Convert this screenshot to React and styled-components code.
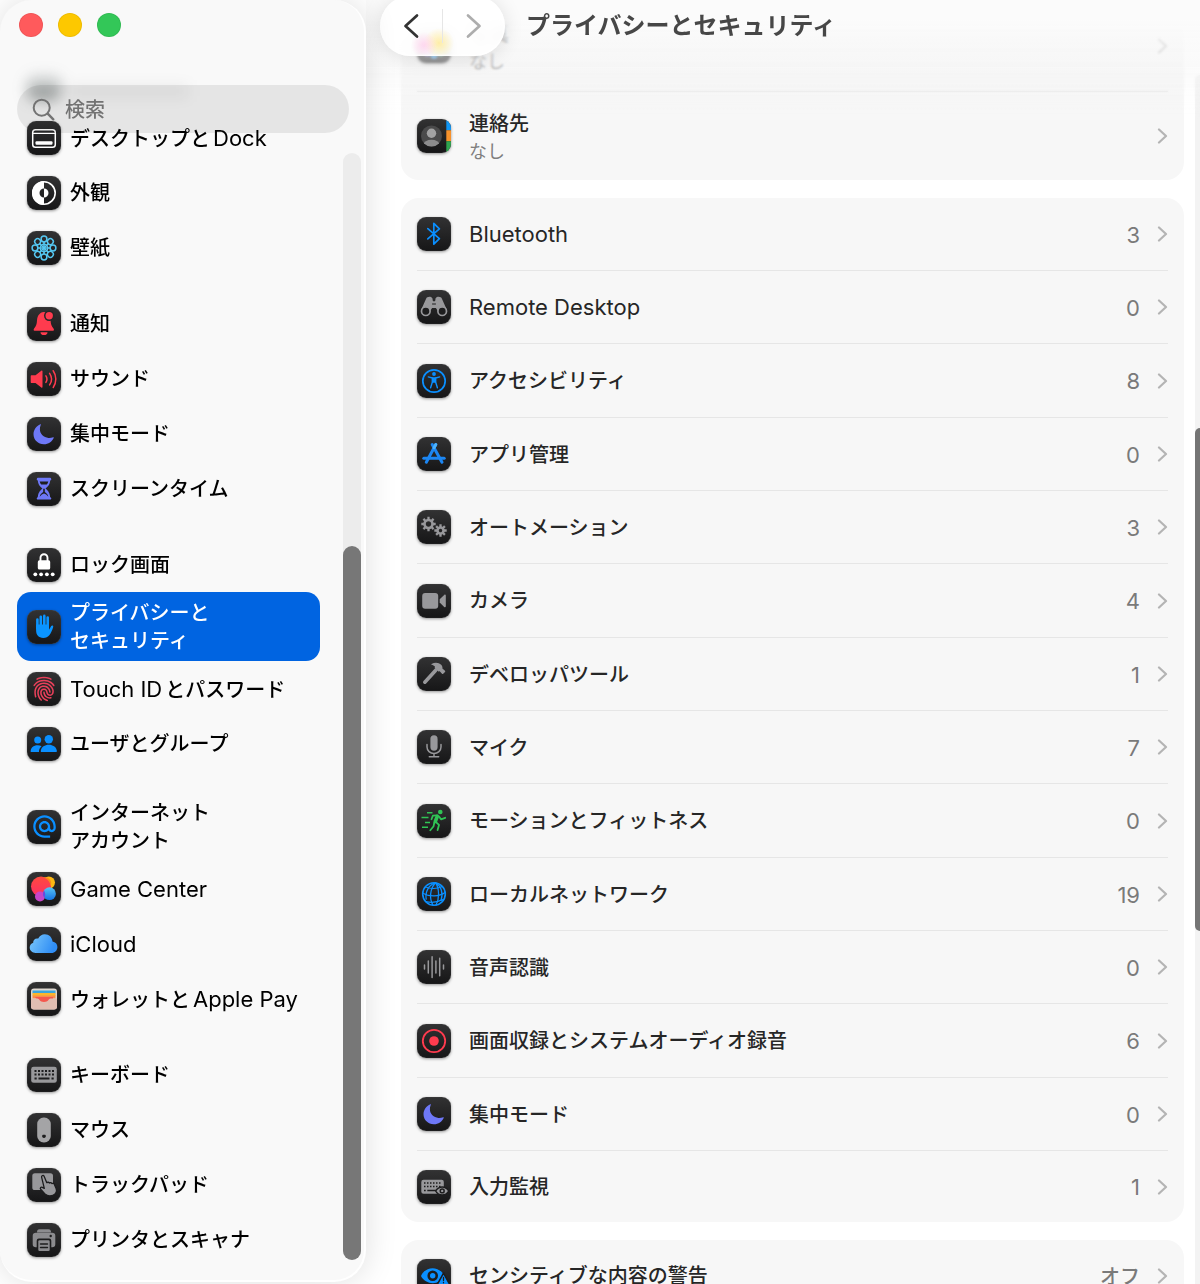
import { Fragment } from 'react'
import styled, { createGlobalStyle, css } from 'styled-components'
import { IoFingerPrint } from 'react-icons/io5'
import { MdAlternateEmail } from 'react-icons/md'

const GlobalStyle = createGlobalStyle`
  * { box-sizing: border-box; }

  body {
    margin: 0;
    background: #fff;
    font-family: Inter, 'Noto Sans CJK JP', sans-serif;
    font-size: 20px;
    line-height: 28px;
    font-weight: 500;
    color: #262626;
  }

  a { color: inherit; text-decoration: none; }
  ul { list-style: none; margin: 0; padding: 0; }
`

const GRAY = '#98989b'
const BLUE = '#0a8fff'
const RED = '#ff3b4e'
const INDIGO = '#6e78f7'
const DARK = '#1d1d1e'

/* ---------- window ---------- */

const Window = styled.div`
  display: flex;
  height: 100vh;
  overflow: hidden;
  background: #fff;
`

const Sidebar = styled.aside`
  position: relative;
  z-index: 2;
  flex: none;
  display: flex;
  width: 366px;
  margin-bottom: 2px;
  padding-left: 17px;
  background: #f9f9f9;
  border-right: 2px solid #fff;
  border-bottom: 2px solid #fff;
  border-radius: 32px;
  box-shadow: 0 0 32px rgba(0, 0, 0, 0.13);
`

const SidebarTop = styled.div`
  position: absolute;
  top: 0;
  left: 0;
  right: 0;
  padding: 13px 15px 0 17px;
`

const Lights = styled.div`
  display: flex;
  gap: 15px;
  padding-left: 2px;
`

const Light = styled.button`
  width: 24px;
  height: 24px;
  padding: 0;
  border: 1px solid rgba(0, 0, 0, 0.06);
  border-radius: 50%;
  background: ${(p) => p.$color};
`

const Search = styled.label`
  display: flex;
  align-items: center;
  gap: 10px;
  height: 48px;
  margin-top: 48px;
  padding: 0 15px;
  border-radius: 24px;
  background: rgba(0, 0, 0, 0.08);
`

const SearchInput = styled.input`
  flex: 1;
  min-width: 0;
  padding: 2px 0 0;
  border: 0;
  outline: 0;
  background: none;
  font: inherit;
  color: #262626;

  &::placeholder { color: #737373; opacity: 1; }
`

/* the row that is scrolled under the search field */
const HiddenRow = styled.div`
  display: flex;
  align-items: flex-end;
  gap: 9px;
  height: 110px;
  padding: 0 0 10px 10px;
  filter: blur(7px);

  &::before {
    content: '';
    width: 34px;
    height: 26px;
    border-radius: 9px;
    background: linear-gradient(rgba(70, 85, 90, 0.1), rgba(60, 70, 68, 0.55));
  }

  &::after {
    content: '';
    width: 118px;
    height: 12px;
    margin-bottom: 3px;
    background: #000;
    opacity: 0.06;
  }
`

const Nav = styled.nav`
  flex: 1;
`

const NavGroup = styled.ul`
  & + & { margin-top: 21px; }
`

const NavLink = styled.a`
  display: flex;
  align-items: center;
  gap: 9px;
  height: ${(p) => (p.$tall ? 69 : 55)}px;
  padding: 0 10px;
  border-radius: 14px;
  color: #000;
  white-space: pre-line;

  ${(p) => p.$active && css`
    background: #0064e1;
    color: #fff;
  `}
`

const NavText = styled.span`
  padding-top: 1px;
`

const Track = styled.div`
  display: flex;
  flex-direction: column;
  width: 18px;
  margin: 153px 3px 20px 23px;
  border-radius: 9px;
  background: #ececec;

  &::before { content: ''; flex: 11; }
`

const Thumb = styled.div`
  flex: 20;
  border-radius: 9px;
  background: #777;
`

/* ---------- main pane ---------- */

const Main = styled.main`
  position: relative;
  flex: 1;
  min-width: 0;
  display: flex;
  align-items: flex-start;
`

const List = styled.div`
  flex: 1;
  min-width: 0;
  display: flex;
  flex-direction: column;
  gap: 18px;
  margin: 0 11px 0 35px;
`

const Card = styled.ul`
  border-radius: ${(p) => (p.$cut ? '0 0 18px 18px' : '18px')};
  background: #f7f7f7;
`

const Row = styled.li`
  height: 73px;
  margin: 0 16px;
  border-bottom: 1px solid #e6e6e6;

  &:nth-child(3n) { height: 74px; }

  ${Card} > &:last-child {
    height: 71px;
    border-bottom: 0;
  }

  ${Card} > &.detail { height: ${(p) => (p.$first ? 92 : 88)}px; }
`

const RowLink = styled.a`
  display: flex;
  align-items: center;
  height: 100%;
`

const RowText = styled.span`
  flex: 1;
  margin-left: 18px;
  padding-top: ${(p) => (p.$detail ? 4 : 2)}px;
  line-height: 27px;
`

const Sub = styled.small`
  display: block;
  font-size: 18px;
  font-weight: 400;
  color: #7f7f7f;
`

const Value = styled.span`
  margin-right: 17px;
  padding-top: 2px;
  color: #7a7a7a;
`

const Latin = styled.span`
  margin: 0 ${(p) => (p.$after ? 3 : 0)}px 0 ${(p) => (p.$before ? 3 : 0)}px;
  font-size: 22px;
  font-weight: 400;
`

const HeaderFade = styled.div`
  position: absolute;
  top: 0;
  left: 0;
  right: 0;
  height: 120px;
  background: linear-gradient(rgba(251, 251, 251, 1) 20px, rgba(249, 249, 249, 0.7) 44px, rgba(244, 244, 244, 0.45) 75px, rgba(244, 244, 244, 0));
  backdrop-filter: blur(1px);
  mask-image: linear-gradient(#000 65px, transparent);
`

const Header = styled.header`
  position: absolute;
  top: 0;
  left: 0;
  right: 0;
  display: flex;
  align-items: flex-start;
  gap: 21px;
  padding-left: 14px;
`

const Pill = styled.div`
  display: flex;
  align-items: center;
  width: 125px;
  height: 60px;
  margin-top: -4px;
  border-radius: 30px;
  background:
    radial-gradient(circle at 44px 49px, rgba(255, 205, 235, 0.75), rgba(255, 205, 235, 0) 13px),
    radial-gradient(circle at 59px 47px, rgba(255, 232, 140, 0.75), rgba(255, 232, 140, 0) 15px),
    rgba(255, 255, 255, 0.86);
  backdrop-filter: blur(4px);
  box-shadow: 0 2px 20px rgba(0, 0, 0, 0.12), inset 0 0 2px 1px #fff;
`

const PillButton = styled.button`
  flex: 1;
  display: flex;
  align-items: center;
  justify-content: center;
  height: 34px;
  padding: 0;
  border: 0;
  background: none;
  color: ${(p) => (p.disabled ? '#adadad' : '#333')};

  & + & { border-left: 1px solid #e6e6e6; }
`

const Title = styled.h1`
  margin: 9px 0 0;
  font-size: 24px;
  line-height: 34px;
  font-weight: 600;
  color: #474747;
`

const MainTrack = styled.div`
  align-self: stretch;
  display: flex;
  flex-direction: column;
  width: 5px;
  margin-top: 75px;
  border-radius: 9px 0 0 0;
  background: #f3f3f3;

  &::before, &::after { content: ''; flex: 7; }
`

const MainThumb = styled.div`
  flex: 10;
  border-radius: 9px 0 0 9px;
  background: #757575;
`

/* ---------- icons ---------- */

const Tile = styled.span`
  flex: none;
  display: flex;
  align-items: center;
  justify-content: center;
  width: 34px;
  height: 34px;
  overflow: hidden;
  border-radius: 9px;
  background: linear-gradient(#323233, #161617);
  box-shadow: 0 1px 3px rgba(0, 0, 0, 0.4), inset 0 0 1px #666;
  color: ${(p) => p.$color || '#fff'};
`

const Art = ({ children }) => (
  <svg width='34' height='34' viewBox='0 0 34 34' fill='currentColor' strokeLinecap='round' strokeLinejoin='round' aria-hidden='true'>
    {children}
  </svg>
)

const petals = [0, 45, 90, 135, 180, 225, 270, 315]

const Gear = ({ x, y, r }) => (
  <g transform={`translate(${x} ${y})`} fill='none' stroke='currentColor' strokeLinecap='butt'>
    <circle r={r - 3.2} strokeWidth='2.6' />
    {petals.map((a) => (
      <path key={a} d={`M0 ${3 - r}V${-r}`} strokeWidth='2.3' transform={`rotate(${a})`} />
    ))}
  </g>
)

const Moon = (
  <path d='M13.4 7.2C9.2 8.9 6.5 12.9 6.5 17.3c0 5.6 4.6 10 10.3 10 4.6 0 8.5-2.7 10-6.5.2-.5-.2-.7-.6-.6-1.5.5-3 .8-4.7.7-4.8-.2-8.400-3.800-8.600-8.300-.1-1.700.2-3.300.9-4.900.2-.5-.1-.7-.4-.5z' />
)

const icons = {
  dock: ['#fff', (
    <>
      <rect x='5.7' y='8.8' width='22.6' height='17.4' rx='2.8' fill='none' stroke='currentColor' strokeWidth='1.5' />
      <path d='M6.5 12.3h21' stroke='currentColor' strokeWidth='1.3' />
      <rect x='8.5' y='20.2' width='17' height='3.5' rx='1' />
    </>
  )],
  appearance: ['#fff', (
    <>
      <circle cx='17' cy='17' r='11.2' fill='none' stroke='currentColor' strokeWidth='1.6' />
      <path d='M17 5a12 12 0 0 0 0 24v-7.5a4.500 4.500 0 0 1 0-9z' />
      <path d='M17 12.5a4.5 4.5 0 0 1 0 9z' />
    </>
  )],
  wallpaper: ['#55c8f2', (
    <g fill='none' stroke='currentColor'>
      {petals.map((a) => (
        <g key={a} transform={`rotate(${a} 17 17)`}>
          <circle cx='17' cy='8' r='2.9' strokeWidth='1.5' />
          <path d='M17 11.2V17' strokeWidth='1.6' />
        </g>
      ))}
      <circle cx='17' cy='17' r='3.8' strokeWidth='1.2' />
    </g>
  )],
  bell: [RED, (
    <>
      <path d='M7.5 23.8c-1 0-1.1-1.3-.4-2.2 2-2.4 2.7-4 2.9-8C10.3 8.7 12.5 5.5 16.7 5c4.3.5 6.6 3.8 6.9 8.6.2 4 .9 5.6 2.9 8 .7.9.6 2.2-.4 2.2z' />
      <path d='M13.500 25.300h7a3.500 2.800 0 0 1-7 0z' />
      <circle cx='22.2' cy='8.8' r='5.2' fill='#262627' />
      <circle cx='22.2' cy='8.8' r='3.7' />
    </>
  )],
  sound: [RED, (
    <>
      <path d='M4.7 13.2h3.8l5.8-4.5c.6-.5 1.2-.2 1.2.6v15.6c0 .8-.6 1.1-1.2.6l-5.8-4.5H4.7c-.6 0-1-.4-1-1v-5.8c0-.6.4-1 1-1z' />
      <g fill='none' stroke='currentColor' strokeWidth='1.5'>
        <path d='M18.900 13.800c1.300 2 1.300 4.600 0 6.600' />
        <path d='M22.600 11.300c2.400 3.500 2.400 8.100 0 11.600' />
        <path d='M26.200 8.700c3.500 5 3.500 11.800 0 16.800' />
      </g>
    </>
  )],
  moon: [INDIGO, Moon],
  hourglass: [INDIGO, (
    <>
      <rect x='9.8' y='5.7' width='14.4' height='2.8' rx='1.2' />
      <rect x='9.8' y='25.2' width='14.4' height='2.4' rx='1.2' />
      <path d='M10.8 7.5h12.400c0 5-2.200 7-4.700 9 2.500 2 4.700 4.500 4.700 9.500H10.800c0-5 2.200-7.500 4.700-9.500-2.500-2-4.700-4-4.700-9z' />
      <path d='M12.700 9.500h8.600c-.3 1.200-.8 2.200-1.500 3h-5.600c-.7-.8-1.200-1.800-1.500-3zM16.200 16.800h1.600v3.200c1.800 1.200 3 2.500 3.500 4.400h-8.600c.5-1.900 1.700-3.200 3.500-4.400z' fill={DARK} />
      <path d='M12.800 25c.8-1.800 2.500-2.800 4.200-3.400 1.700.6 3.400 1.600 4.200 3.400z' />
    </>
  )],
  lock: ['#fff', (
    <>
      <rect x='10.8' y='12.3' width='12.4' height='9.2' rx='1.6' />
      <path d='M13.500 12.500V9.700a3.500 3.500 0 0 1 7 0v2.800' fill='none' stroke='currentColor' strokeWidth='1.9' />
      {[8.3, 14.1, 19.9, 25.7].map((x) => <circle key={x} cx={x} cy='26.3' r='1.9' />)}
    </>
  )],
  hand: ['#0a94ff', (
    <>
      <path d='M10.400 9.500v9M13.800 6.700v11M17.300 5.900v11M20.700 7.600v11' fill='none' stroke='currentColor' strokeWidth='2.6' />
      <path d='M9.100 14.500h12.900v5.200l2.200-3.600c.7-1 2.500-.6 2 1-1 3.300-2.300 6.200-3.700 7.900-1.600 2-3.600 2.900-6.200 2.900-4.800 0-7.200-3-7.200-7.600z' />
    </>
  )],
  users: [BLUE, (
    <>
      <circle cx='10.7' cy='13' r='3.5' />
      <path d='M3.700 24.900c-.4-4 2.800-6.700 7-6.700 1.500 0 2.800.3 3.900 1-1.800 1.500-2.700 3.300-2.600 5.700z' />
      <circle cx='21.8' cy='12.2' r='4.2' />
      <path d='M14.300 24.900c-.6-.2-.6-.9-.5-1.500.7-3.400 3.900-5.600 8-5.600s7.300 2.200 8 5.600c.1.600.1 1.300-.5 1.500z' />
    </>
  )],
  games: ['#fff', (
    <>
      <defs>
        <linearGradient id='gcBlue' x2='0' y2='1'><stop stopColor='#58c4f5' /><stop offset='1' stopColor='#1573e6' /></linearGradient>
        <linearGradient id='gcRed' x2='0' y2='1'><stop stopColor='#ff4a3e' /><stop offset='1' stopColor='#fb2f66' /></linearGradient>
      </defs>
      <circle cx='21.8' cy='10.6' r='6.2' fill='#fdb913' />
      <circle cx='14' cy='14.5' r='10' fill='url(#gcRed)' />
      <path d='M16.500 5.500a6 6 0 0 1 7 8.500 10 10 0 0 0-7-8.500z' fill='#f98a1a' />
      <circle cx='13' cy='24.5' r='5' fill='#c545c9' />
      <circle cx='22.5' cy='21.7' r='6.4' fill='url(#gcBlue)' />
      <path d='M17 18.500a6.400 6.400 0 0 0 .5 7.200c1-2 1-5-.5-7.200z' fill='#6b49dd' />
    </>
  )],
  cloud: ['#fff', (
    <>
      <defs><linearGradient id='icloud' x2='1' y2='.3'><stop stopColor='#7cc9fb' /><stop offset='1' stopColor='#2f8df5' /></linearGradient></defs>
      <path d='M8.600 26c-3.300 0-5.900-2.300-5.900-5.400 0-2.400 1.400-4.200 3.500-4.900-.2-2.900 2.400-4.900 5-4.100 1.300-2.800 3.700-4.400 6.600-4.400 4.300 0 7.400 3.100 7.700 7.300 2.900.4 4.900 2.700 4.900 5.500 0 3.400-2.600 6-6 6z' fill='url(#icloud)' />
    </>
  )],
  wallet: ['#fff', (
    <>
      <rect x='4' y='6.5' width='26' height='21' rx='3' fill='#ded8d0' />
      <path d='M5.500 8.500h23v3h-23z' fill='#3aa5dd' />
      <path d='M5.500 11h23v3h-23z' fill='#fbb62c' />
      <path d='M5.500 13.500h23v3h-23z' fill='#f78f4c' />
      <path d='M8 15h18v3l-9 4-6-3z' fill='#f4574e' />
      <path d='M4 16.500h6.500c1.800 0 2 3.500 6.500 3.500s4.700-3.500 6.500-3.500H30v8a3 3 0 0 1-3 3H7a3 3 0 0 1-3-3z' fill='#e0beb2' />
    </>
  )],
  keyboard: [GRAY, (
    <>
      <rect x='4.2' y='8.8' width='25.6' height='16' rx='2.4' />
      <path d='M7.500 13h19.500M7.500 16.500h19.500' stroke={DARK} strokeWidth='2' strokeDasharray='2 1.5' strokeLinecap='butt' />
      <path d='M7.500 20.500h2.200M11.500 20.500h11M24.500 20.500h2.200' stroke={DARK} strokeWidth='1.9' strokeLinecap='butt' />
    </>
  )],
  mouse: ['#a4a4a6', (
    <>
      <rect x='10.2' y='4.5' width='13.6' height='25' rx='6.5' />
      <path d='M17 21.800c1-.5 2 .2 1.900 1.300-.1 1-.9 2.100-1.900 1.700-1 .4-1.900-.7-1.900-1.700-.1-1.100.9-1.800 1.900-1.300z' fill={DARK} />
    </>
  )],
  trackpad: [GRAY, (
    <>
      <rect x='5.3' y='5.2' width='20.7' height='16.8' rx='2.6' />
      <path
        d='M14.600 9.200c-.5-1.700 1.900-2.500 2.600-.8l2.600 6.300c1-.8 2.200-.5 2.600.4.900-.7 2.100-.4 2.500.5 1-.6 2.100-.1 2.500.9l1.700 4c1 2.700-.2 5.300-2.800 6.600-3.200 1.500-6.300.8-8.600-1.500l-4-4.300c-1.100-1.300.2-2.600 1.600-1.900l2 1z'
        stroke={DARK} strokeWidth='1.3'
      />
    </>
  )],
  printer: ['#8c8c8f', (
    <>
      <path d='M10 9.500c0-2 .8-3.200 2.500-3.200h9c1.700 0 2.500 1.200 2.500 3.200z' />
      <rect x='5.7' y='9.7' width='22.6' height='14.5' rx='3.2' />
      <rect x='9.7' y='15.5' width='14.6' height='13' rx='2.2' fill={DARK} />
      <rect x='11.3' y='17.2' width='11.4' height='10.8' rx='1.3' />
      <path d='M13.500 21h7M13.500 24.500h7' stroke={DARK} strokeWidth='1.4' />
      <circle cx='23.7' cy='13' r='1.2' fill={DARK} />
    </>
  )],
  bluetooth: [BLUE, <path d='M10.800 11.600 22.400 21.600 16.800 27.200V6.300L22.400 11.900 10.800 21.900' fill='none' stroke='currentColor' strokeWidth='1.7' />],
  binoculars: [GRAY, (
    <>
      <path d='M9.200 8.600c.3-2.300 5.500-2.700 6.200-.3l.5 3h2.200l.5-3c.7-2.400 5.900-2 6.200.3l4.700 10.500-8 3-2.600-4h-3.800l-2.600 4-8-3z' />
      <g fill={DARK} stroke='currentColor' strokeWidth='1.7'>
        <circle cx='8.8' cy='21.2' r='4.3' />
        <circle cx='25.2' cy='21.2' r='4.3' />
      </g>
      <path d='M15.500 14h3' stroke={DARK} strokeWidth='1' />
    </>
  )],
  accessibility: [BLUE, (
    <>
      <circle cx='17' cy='17' r='11.2' fill='none' stroke='currentColor' strokeWidth='1.7' />
      <circle cx='17' cy='10' r='1.9' />
      <path d='M11.300 12.900 15.300 14v4.200l-1.700 5.600M22.700 12.900 18.700 14v4.200l1.700 5.600' fill='none' stroke='currentColor' strokeWidth='1.4' />
      <path d='M15 13.300h4v5.500h-4z' />
    </>
  )],
  appStore: ['#1c86f2', (
    <g fill='none' stroke='currentColor' strokeWidth='3'>
      <path d='M6.800 21.300h20.400' />
      <path d='M18.800 7.500 9.300 25.300M15.200 7.500l9.800 17.800' />
      <path d='M17 10.700l1.800-3.200' stroke='#4db2fb' />
    </g>
  )],
  gears: [GRAY, (
    <>
      <Gear x='11.5' y='14' r={7.2} />
      <Gear x='23.5' y='20.5' r={6.2} />
    </>
  )],
  camera: [GRAY, (
    <>
      <rect x='5.2' y='9' width='16' height='15.8' rx='3' />
      <path d='M22.700 15.200l4.500-4.300c.7-.6 1.600-.4 1.600.6v10.800c0 1-.9 1.200-1.600.6l-4.500-4.300z' />
    </>
  )],
  hammer: [GRAY, (
    <>
      <path d='M7.800 25.200 18.500 13.500' stroke='currentColor' strokeWidth='3.6' />
      <path d='M14.500 7c3.200-2 7.200-1.800 9.700.8 1.200 1.300 1.400 2.500 1.200 3.700l2.600 2.200c.4.4.4.8 0 1.200l-1.800 1.800c-.4.4-.8.4-1.200 0l-2.300-2.400-1.500.3-3.500-3.300.2-1.700c-.7-1-1.900-1.700-3.300-1.900-.4-.1-.4-.5-.1-.7z' />
    </>
  )],
  mic: [GRAY, (
    <>
      <rect x='13.4' y='5.3' width='7.2' height='15.4' rx='3.6' />
      <path d='M10 14.500V17a7 6.500 0 0 0 14 0v-2.500M17 23.500v3M12.300 26.700h9.400' fill='none' stroke='currentColor' strokeWidth='1.5' />
    </>
  )],
  runner: ['#30c455', (
    <>
      <circle cx='23.3' cy='8' r='2.3' />
      <g fill='none' stroke='currentColor' strokeWidth='1.8'>
        <path d='M20.300 12.300 18.300 17.500' strokeWidth='3.6' />
        <path d='M20 11.300l-4.200.4-1.300 3.500M22 12.500l2 2.800 4.200-1.500' />
        <path d='M19 18.200l3 2.700-1.400 5.200M17.300 18.500l-.7 3.700-3.300 4' />
        <path d='M10 8.700h5.500M4.500 13.500h7M8 18.500h5M5 23.300h6' strokeWidth='1.4' strokeLinecap='butt' />
      </g>
    </>
  )],
  globe: [BLUE, (
    <g fill='none' stroke='currentColor' strokeWidth='1.3'>
      <circle cx='17' cy='17' r='11.3' strokeWidth='1.6' />
      <path d='M18.500 5.700c-5.500 6-6.500 15.500-2.500 22.500M18.500 5.700c-7 2.500-10.500 9-9.300 16.500M18.500 5.700c4 6 4 16 .5 22.500M18.500 5.700c5.800 3.500 8 10.500 5.500 18' />
      <path d='M8.500 10c4.500 1.800 11.500 2 16.500-.4M5.800 16.200c6.500 3.700 16.500 3.500 22.300-.7M9 24.700c5 1 11.500.6 16.500-2' />
    </g>
  )],
  wave: [GRAY, <path d='M7.500 15v4M11.300 11v12M15.100 6.800v20.600M18.900 11v12M22.700 8.300v17.400M26.500 15v4' stroke='currentColor' strokeWidth='1.5' />],
  record: [RED, (
    <>
      <circle cx='17' cy='17' r='11.2' fill='none' stroke='currentColor' strokeWidth='1.8' />
      <circle cx='17' cy='17' r='4.8' />
    </>
  )],
  keyboardEye: [GRAY, (
    <>
      <rect x='4.3' y='9.7' width='22.5' height='14' rx='2.2' />
      <path d='M7 13h17M7 16.500h17' stroke={DARK} strokeWidth='1.5' strokeDasharray='1.5 1.5' strokeLinecap='butt' />
      <path d='M7 20.500h1.700M10.300 20.500h9' stroke={DARK} strokeWidth='1.5' strokeLinecap='butt' />
      <path d='M18.700 21c3-5.500 10-5.500 13 0-3 5.300-10 5.300-13 0z' stroke={DARK} strokeWidth='1.5' />
      <circle cx='25.2' cy='20.9' r='2.7' fill={DARK} />
      <circle cx='25.2' cy='20.9' r='1.2' />
    </>
  )],
  eyeWarning: [BLUE, (
    <>
      <path d='M4 17c4.500-10.500 18.500-10.500 23.500 0-4.500 9.500-19 9.500-23.500 0z' />
      <circle cx='15.7' cy='16.7' r='5.3' fill={DARK} />
      <circle cx='15.7' cy='16.7' r='2.7' />
      <path d='M26.500 14.200 33 26H20z' stroke={DARK} strokeWidth='1.5' />
      <path d='M26.500 18.500v3M26.500 23.500v.3' stroke={DARK} strokeWidth='1.3' />
    </>
  )],
  contacts: ['#fff', (
    <>
      <path d='M29.300 0H34v11.300h-4.700z' fill='#1096f5' />
      <path d='M29.300 11.300H34v11h-4.700z' fill='#f7922b' />
      <path d='M29.300 22.300H34V34h-4.700z' fill='#2fa44f' />
      <clipPath id='contactRing'><circle cx='14.5' cy='17' r='10.5' /></clipPath>
      <circle cx='14.5' cy='17' r='10.5' fill='#4a4a4b' />
      <circle cx='14.5' cy='14.3' r='4.7' fill='#a2a2a3' />
      <ellipse cx='14.5' cy='25.5' rx='8' ry='4.7' fill='#8c8c8d' clipPath='url(#contactRing)' />
    </>
  )],
  photos: ['#fff', petals.map((a, i) => (
    <rect
      key={a} x='13.5' y='4' width='7' height='12' rx='3.5' opacity='.9' transform={`rotate(${a} 17 17)`}
      fill={['#f8a32b', '#f6d32d', '#9cca3c', '#4fb38a', '#2f9bf0', '#7b6be0', '#d45ac0', '#f2566b'][i]}
    />
  ))],
}

const Icon = ({ name }) => {
  if (name === 'at') return <Tile $color={BLUE}><MdAlternateEmail size={27} aria-hidden='true' /></Tile>
  if (name === 'fingerprint') return <Tile $color='#e8405a'><IoFingerPrint size={26} aria-hidden='true' /></Tile>
  const [color, art] = icons[name]
  return <Tile $color={color}><Art>{art}</Art></Tile>
}

const Chevron = () => (
  <svg width='11' height='16' viewBox='0 0 11 16' fill='none' stroke='#b4b4b4' strokeWidth='2.2' strokeLinecap='round' strokeLinejoin='round' aria-hidden='true'>
    <path d='M2 1.500 9 8l-7 6.500' />
  </svg>
)

// latin words run a little larger than the kana beside them, with a thin gap between
const Label = ({ text }) =>
  text.split(/([A-Za-z0-9][A-Za-z0-9 ]*)/).map((part, i, all) =>
    i % 2
      ? <Latin key={i} $before={all[i - 1] !== ''} $after={all[i + 1] !== ''}>{part}</Latin>
      : <Fragment key={i}>{part}</Fragment>
  )

/* ---------- data ---------- */

const navGroups = [
  [
    ['dock', 'デスクトップとDock'],
    ['appearance', '外観'],
    ['wallpaper', '壁紙'],
  ],
  [
    ['bell', '通知'],
    ['sound', 'サウンド'],
    ['moon', '集中モード'],
    ['hourglass', 'スクリーンタイム'],
  ],
  [
    ['lock', 'ロック画面'],
    ['hand', 'プライバシーと\nセキュリティ'],
    ['fingerprint', 'Touch IDとパスワード'],
    ['users', 'ユーザとグループ'],
  ],
  [
    ['at', 'インターネット\nアカウント'],
    ['games', 'Game Center'],
    ['cloud', 'iCloud'],
    ['wallet', 'ウォレットとApple Pay'],
  ],
  [
    ['keyboard', 'キーボード'],
    ['mouse', 'マウス'],
    ['trackpad', 'トラックパッド'],
    ['printer', 'プリンタとスキャナ'],
  ],
]

const access = [
  ['bluetooth', 'Bluetooth', '3'],
  ['binoculars', 'Remote Desktop', '0'],
  ['accessibility', 'アクセシビリティ', '8'],
  ['appStore', 'アプリ管理', '0'],
  ['gears', 'オートメーション', '3'],
  ['camera', 'カメラ', '4'],
  ['hammer', 'デベロッパツール', '1'],
  ['mic', 'マイク', '7'],
  ['runner', 'モーションとフィットネス', '0'],
  ['globe', 'ローカルネットワーク', '19'],
  ['wave', '音声認識', '0'],
  ['record', '画面収録とシステムオーディオ録音', '6'],
  ['moon', '集中モード', '0'],
  ['keyboardEye', '入力監視', '1'],
]

function SettingRow({ icon, title, sub, value, first }) {
  return (
    <Row className={sub ? 'detail' : undefined} $first={first}>
      <RowLink href={`#${icon}`}>
        <Icon name={icon} />
        <RowText $detail={!!sub}>
          <Label text={title} />
          {sub && <Sub>{sub}</Sub>}
        </RowText>
        {value && <Value><Label text={value} /></Value>}
        <Chevron />
      </RowLink>
    </Row>
  )
}

export default function App() {
  return (
    <>
      <GlobalStyle />
      <Window>
        <Sidebar>
          <Nav>
            <HiddenRow aria-hidden='true' />
            {navGroups.map((group, i) => (
              <NavGroup key={i}>
                {group.map(([icon, label]) => (
                  <li key={icon}>
                    <NavLink
                      href={`#${icon}`}
                      $tall={label.includes('\n')}
                      $active={icon === 'hand'}
                      aria-current={icon === 'hand' ? 'page' : undefined}
                    >
                      <Icon name={icon} />
                      <NavText><Label text={label} /></NavText>
                    </NavLink>
                  </li>
                ))}
              </NavGroup>
            ))}
          </Nav>
          <Track><Thumb /></Track>

          <SidebarTop>
            <Lights>
              <Light type='button' $color='#ff5a5c' aria-label='閉じる' />
              <Light type='button' $color='#fdc800' aria-label='しまう' />
              <Light type='button' $color='#33c758' aria-label='拡大' />
            </Lights>
            <Search>
              <svg width='23' height='23' viewBox='0 0 23 23' fill='none' stroke='#737373' strokeWidth='2' strokeLinecap='round' aria-hidden='true'>
                <circle cx='9.7' cy='9.7' r='8' />
                <path d='M15.700 15.700 21.300 21.300' strokeWidth='2.4' />
              </svg>
              <SearchInput type='text' placeholder='検索' aria-label='検索' />
            </Search>
          </SidebarTop>
        </Sidebar>

        <Main>
          <List>
            <Card $cut>
              <SettingRow icon='photos' title='写真' sub='なし' first />
              <SettingRow icon='contacts' title='連絡先' sub='なし' />
            </Card>
            <Card>
              {access.map(([icon, title, value]) => (
                <SettingRow key={icon} icon={icon} title={title} value={value} />
              ))}
            </Card>
            <Card>
              <SettingRow icon='eyeWarning' title='センシティブな内容の警告' value='オフ' />
            </Card>
          </List>
          <MainTrack><MainThumb /></MainTrack>

          <HeaderFade />
          <Header>
            <Pill>
              <PillButton type='button' aria-label='戻る'>
                <svg width='16' height='26' viewBox='0 0 16 26' fill='none' stroke='currentColor' strokeWidth='2.7' strokeLinecap='round' strokeLinejoin='round' aria-hidden='true'>
                  <path d='M14 2.500 2.500 13 14 23.500' />
                </svg>
              </PillButton>
              <PillButton type='button' aria-label='進む' disabled>
                <svg width='16' height='26' viewBox='0 0 16 26' fill='none' stroke='currentColor' strokeWidth='2.7' strokeLinecap='round' strokeLinejoin='round' aria-hidden='true'>
                  <path d='M2 2.500 13.500 13 2 23.500' />
                </svg>
              </PillButton>
            </Pill>
            <Title>プライバシーとセキュリティ</Title>
          </Header>
        </Main>
      </Window>
    </>
  )
}
